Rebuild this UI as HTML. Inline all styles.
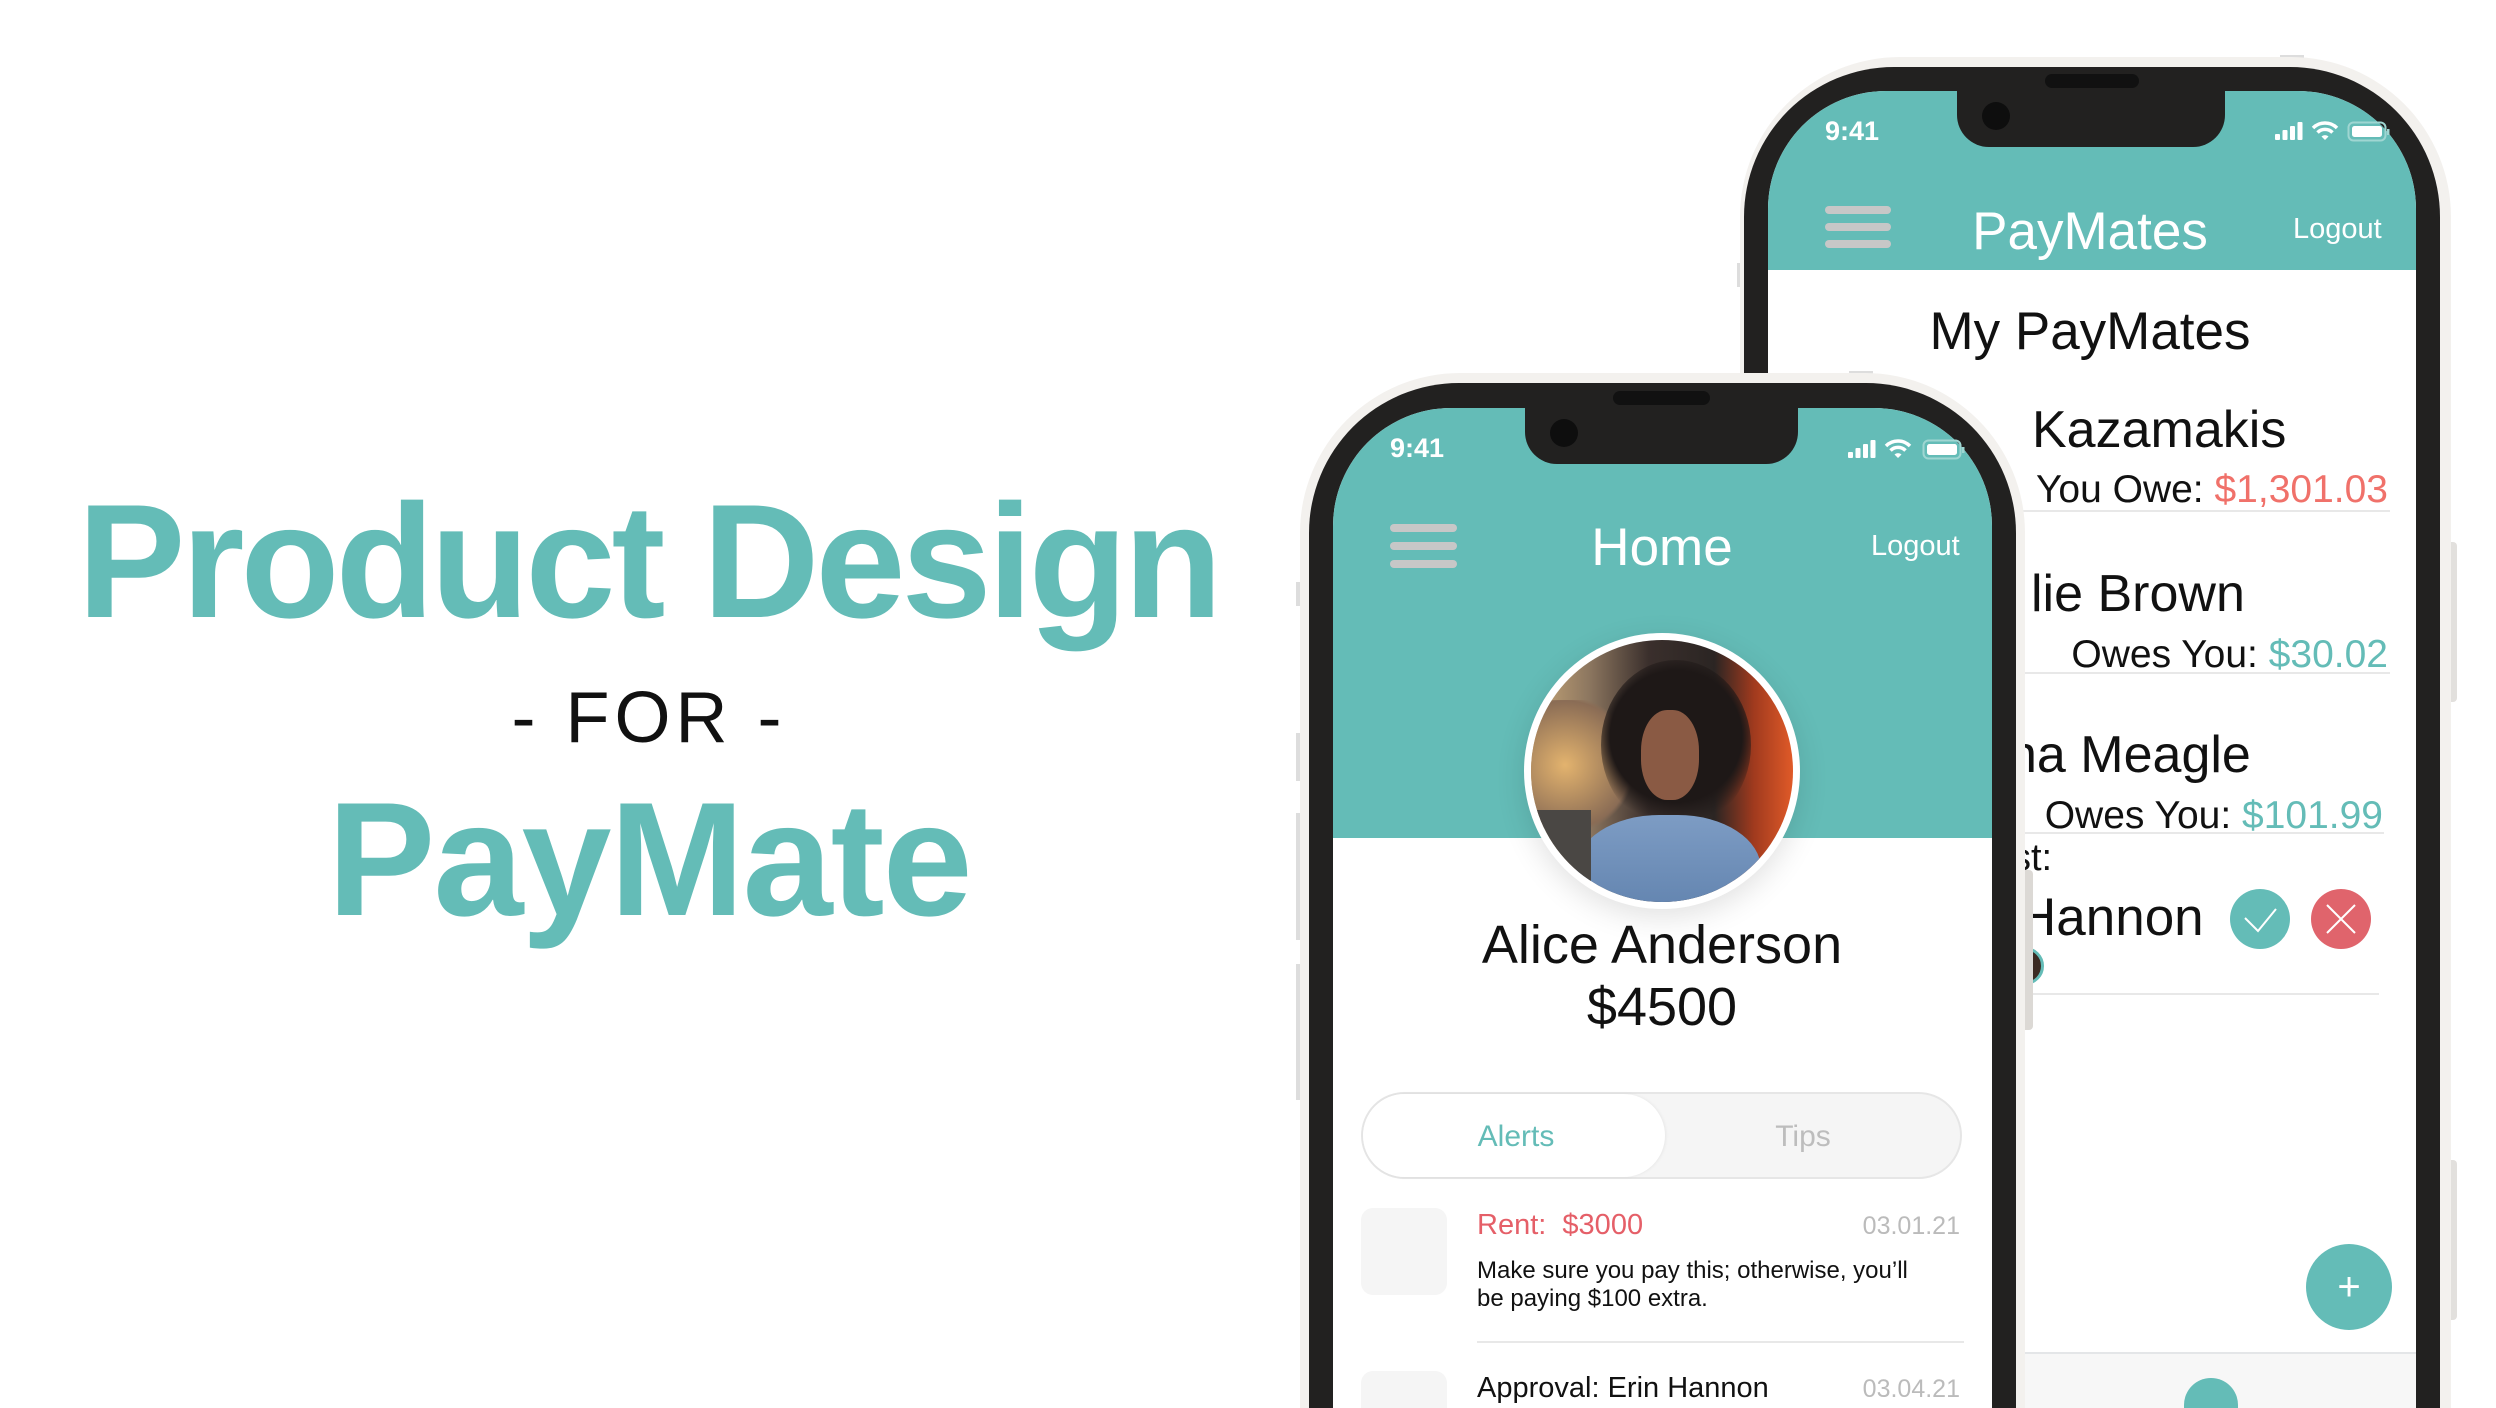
<!DOCTYPE html>
<html><head><meta charset="utf-8"><style>
*{margin:0;padding:0;box-sizing:border-box}
html,body{width:2496px;height:1408px;overflow:hidden;background:#fff}
#w{position:relative;width:2496px;height:1408px;overflow:hidden;font-family:"Liberation Sans",sans-serif}
.a{position:absolute}
.t{position:absolute;line-height:1;white-space:nowrap}
.teal{color:#64bcb7}
.bar{position:absolute;height:8px;border-radius:4px;background:#c7c7c7}
</style></head><body><div id="w">

<!-- Left title -->
<div class="t" style="left:0;width:1296px;text-align:center;top:481px;font-size:162px;font-weight:bold;letter-spacing:-4px;color:#64bcb7">Product Design</div>
<div class="t" style="left:0;width:1298px;text-align:center;top:682px;font-size:72px;letter-spacing:5px;color:#111">- FOR -</div>
<div class="t" style="left:0;width:1298px;text-align:center;top:779px;font-size:162px;font-weight:bold;letter-spacing:-2px;color:#64bcb7">PayMate</div>

<!-- BACK PHONE -->
<div class="a" style="left:1737px;top:263px;width:6px;height:24px;background:#ddd"></div>
<div class="a" style="left:2280px;top:55px;width:24px;height:10px;background:#ddd"></div>
<div class="a" style="left:2450px;top:542px;width:7px;height:160px;background:#e2e0dd;border-radius:0 4px 4px 0"></div>
<div class="a" style="left:2450px;top:1160px;width:7px;height:160px;background:#e2e0dd;border-radius:0 4px 4px 0"></div>
<div class="a" style="left:1740px;top:57px;width:711px;height:1351px;border-radius:160px 160px 0 0;background:#f3f1ee"></div>
<div class="a" style="left:1744px;top:67px;width:696px;height:1341px;border-radius:150px 150px 0 0;background:#222120"></div>
<div class="a" style="left:1768px;top:91px;width:648px;height:1317px;border-radius:118px 118px 0 0;background:#fff;overflow:hidden">
  <div class="a" style="left:0;top:0;width:648px;height:179px;background:#64bcb7"></div>
  <div class="a" style="left:0;top:1261px;width:648px;height:56px;background:#f7f7f7;border-top:2px solid #e4e6e8"></div>
  <div class="a" style="left:416px;top:1287px;width:54px;height:30px;border-radius:27px 27px 0 0;background:#64bcb7"></div>
</div>
<div class="a" style="left:1957px;top:67px;width:268px;height:80px;background:#222120;border-radius:0 0 32px 32px"></div>
<div class="a" style="left:2045px;top:74px;width:94px;height:14px;background:#111;border-radius:8px"></div>
<div class="a" style="left:1982px;top:102px;width:28px;height:28px;background:#0e0e0e;border-radius:50%"></div>
<div class="t" style="left:1825px;top:118px;font-size:27px;font-weight:bold;color:#fff">9:41</div>
<svg class="a" style="left:2275px;top:121px" width="120" height="22" viewBox="0 0 120 22">
 <rect x="0" y="13" width="5" height="6" rx="1" fill="#fff"/><rect x="7.5" y="9" width="5" height="10" rx="1" fill="#fff"/><rect x="15" y="5" width="5" height="14" rx="1" fill="#fff"/><rect x="22.5" y="1" width="5" height="18" rx="1" fill="#fff"/>
 <path d="M38 7 A17 17 0 0 1 62 7" stroke="#fff" stroke-width="3.5" fill="none"/><path d="M42.5 11.5 A10.5 10.5 0 0 1 57.5 11.5" stroke="#fff" stroke-width="3.5" fill="none"/><path d="M46.5 15.5 L50 19 L53.5 15.5 A5 5 0 0 0 46.5 15.5Z" fill="#fff"/>
 <rect x="73.5" y="1.5" width="37" height="18" rx="5" fill="none" stroke="#9fd6d2" stroke-width="2"/><rect x="77" y="5" width="30" height="11" rx="2.5" fill="#fff"/><rect x="112" y="8" width="2.5" height="6" fill="#9fd6d2"/>
</svg>
<div class="bar" style="left:1825px;top:206px;width:66px"></div>
<div class="bar" style="left:1825px;top:223px;width:66px"></div>
<div class="bar" style="left:1825px;top:240px;width:66px"></div>
<div class="t" style="left:1890px;width:400px;text-align:center;top:205px;font-size:53px;color:#fff">PayMates</div>
<div class="t" style="left:2293px;top:215px;font-size:29px;color:#fff">Logout</div>
<div class="t" style="left:1890px;width:400px;text-align:center;top:305px;font-size:53px;color:#111">My PayMates</div>

<div class="t" style="left:2032px;top:404px;font-size:52px;color:#111">Kazamakis</div>
<div class="t" style="right:108px;top:470px;font-size:39px;color:#111">You Owe: <span style="color:#f0716a">$1,301.03</span></div>
<div class="a" style="left:1800px;top:510px;width:590px;height:2px;background:#e8e8e8"></div>
<div class="t" style="left:2031px;top:568px;font-size:52px;color:#111">lie Brown</div>
<div class="t" style="right:108px;top:635px;font-size:39px;color:#111">Owes You: <span class="teal">$30.02</span></div>
<div class="a" style="left:1800px;top:672px;width:590px;height:2px;background:#e8e8e8"></div>
<div class="t" style="left:2008px;top:729px;font-size:52px;color:#111">na Meagle</div>
<div class="t" style="right:113px;top:796px;font-size:39px;color:#111">Owes You: <span class="teal">$101.99</span></div>
<div class="a" style="left:1800px;top:832px;width:584px;height:2px;background:#e8e8e8"></div>
<div class="t" style="left:2012px;top:839px;font-size:38px;color:#111">st:</div>
<div class="t" style="left:2018px;top:891px;font-size:53px;color:#111">Hannon</div>
<div class="a" style="left:2230px;top:889px;width:60px;height:60px;border-radius:50%;background:#64bcb7"></div>
<svg class="a" style="left:2230px;top:889px" width="60" height="60"><path d="M15 29 L28 42 L46 20" stroke="#fff" stroke-width="2" fill="none"/></svg>
<div class="a" style="left:2311px;top:889px;width:60px;height:60px;border-radius:50%;background:#e0646c"></div>
<svg class="a" style="left:2311px;top:889px" width="60" height="60"><path d="M16 16 L44 44 M44 16 L16 44" stroke="#fff" stroke-width="2" fill="none"/></svg>
<div class="a" style="left:1800px;top:993px;width:579px;height:2px;background:#e8e8e8"></div>
<div class="a" style="left:2006px;top:947px;width:38px;height:38px;border-radius:50%;background:#3b2a22;border:3px solid #64bcb7"></div>
<div class="a" style="left:2306px;top:1244px;width:86px;height:86px;border-radius:50%;background:#64bcb7;color:#fff;font-size:40px;line-height:86px;text-align:center">+</div>

<!-- FRONT PHONE -->
<div class="a" style="left:1296px;top:582px;width:6px;height:24px;background:#ddd"></div>
<div class="a" style="left:1296px;top:733px;width:6px;height:48px;background:#ddd"></div>
<div class="a" style="left:1296px;top:813px;width:6px;height:127px;background:#ddd"></div>
<div class="a" style="left:1296px;top:964px;width:6px;height:136px;background:#ddd"></div>
<div class="a" style="left:1849px;top:371px;width:24px;height:10px;background:#ddd"></div>
<div class="a" style="left:2025px;top:870px;width:8px;height:160px;background:#dcd9d5;border-radius:0 4px 4px 0"></div>
<div class="a" style="left:1300px;top:373px;width:725px;height:1035px;border-radius:160px 160px 0 0;background:#f3f1ee"></div>
<div class="a" style="left:1309px;top:383px;width:707px;height:1025px;border-radius:150px 150px 0 0;background:#222120"></div>
<div class="a" style="left:1333px;top:408px;width:659px;height:1000px;border-radius:118px 118px 0 0;background:#fff;overflow:hidden">
  <div class="a" style="left:0;top:0;width:659px;height:430px;background:#64bcb7"></div>
</div>
<div class="a" style="left:1525px;top:383px;width:273px;height:81px;background:#222120;border-radius:0 0 32px 32px"></div>
<div class="a" style="left:1613px;top:391px;width:97px;height:14px;background:#111;border-radius:8px"></div>
<div class="a" style="left:1550px;top:419px;width:28px;height:28px;background:#0e0e0e;border-radius:50%"></div>
<div class="t" style="left:1390px;top:435px;font-size:27px;font-weight:bold;color:#fff">9:41</div>
<svg class="a" style="left:1848px;top:439px" width="120" height="22" viewBox="0 0 120 22">
 <rect x="0" y="13" width="5" height="6" rx="1" fill="#fff"/><rect x="7.5" y="9" width="5" height="10" rx="1" fill="#fff"/><rect x="15" y="5" width="5" height="14" rx="1" fill="#fff"/><rect x="22.5" y="1" width="5" height="18" rx="1" fill="#fff"/>
 <path d="M38 7 A17 17 0 0 1 62 7" stroke="#fff" stroke-width="3.5" fill="none"/><path d="M42.5 11.5 A10.5 10.5 0 0 1 57.5 11.5" stroke="#fff" stroke-width="3.5" fill="none"/><path d="M46.5 15.5 L50 19 L53.5 15.5 A5 5 0 0 0 46.5 15.5Z" fill="#fff"/>
 <rect x="75.5" y="1.5" width="37" height="18" rx="5" fill="none" stroke="#9fd6d2" stroke-width="2"/><rect x="79" y="5" width="30" height="11" rx="2.5" fill="#fff"/><rect x="114" y="8" width="2.5" height="6" fill="#9fd6d2"/>
</svg>
<div class="bar" style="left:1390px;top:524px;width:67px"></div>
<div class="bar" style="left:1390px;top:542px;width:67px"></div>
<div class="bar" style="left:1390px;top:560px;width:67px"></div>
<div class="t" style="left:1462px;width:400px;text-align:center;top:521px;font-size:53px;color:#fff">Home</div>
<div class="t" style="left:1871px;top:532px;font-size:29px;color:#fff">Logout</div>

<!-- avatar -->
<div class="a" style="left:1524px;top:633px;width:276px;height:276px;border-radius:50%;background:#fff;box-shadow:0 8px 30px rgba(0,0,0,.12)"></div>
<div class="a" style="left:1531px;top:640px;width:262px;height:262px;border-radius:50%;overflow:hidden;background:linear-gradient(90deg,#c9a878 0%,#8d7760 22%,#3a2f2c 45%,#2b2523 70%,#a03a1e 85%,#e05a28 100%)">
  <div class="a" style="left:-10px;top:60px;width:110px;height:130px;background:radial-gradient(ellipse at 40% 50%,#e3b36e,#8a6c55 70%,transparent 75%)"></div>
  <div class="a" style="left:70px;top:20px;width:150px;height:170px;border-radius:50%;background:radial-gradient(circle at 50% 45%,#1e1817 55%,rgba(30,24,23,0) 72%)"></div>
  <div class="a" style="left:110px;top:70px;width:58px;height:90px;border-radius:45%;background:#8a5a44"></div>
  <div class="a" style="left:45px;top:175px;width:185px;height:120px;border-radius:45% 45% 0 0;background:linear-gradient(180deg,#7d9cc4,#5c7eaa)"></div>
  <div class="a" style="left:0;top:170px;width:60px;height:100px;background:#4a4744"></div>
</div>

<div class="t" style="left:1462px;width:400px;text-align:center;top:918px;font-size:54px;color:#111">Alice Anderson</div>
<div class="t" style="left:1462px;width:400px;text-align:center;top:980px;font-size:54px;color:#111">$4500</div>

<div class="a" style="left:1361px;top:1092px;width:601px;height:87px;border-radius:44px;background:#f5f5f5;border:2px solid #e6e6e6"></div>
<div class="a" style="left:1363px;top:1094px;width:302px;height:83px;border-radius:42px;background:#fff;box-shadow:1px 0 3px rgba(0,0,0,.06)"></div>
<div class="t" style="left:1416px;width:200px;text-align:center;top:1122px;font-size:30px;color:#64bcb7">Alerts</div>
<div class="t" style="left:1703px;width:200px;text-align:center;top:1122px;font-size:30px;color:#bdbdbd">Tips</div>

<div class="a" style="left:1361px;top:1208px;width:86px;height:87px;border-radius:12px;background:#f5f5f5"></div>
<div class="t" style="left:1477px;top:1211px;font-size:29px;color:#e55f68">Rent:&nbsp; $3000</div>
<div class="t" style="right:536px;top:1214px;font-size:25px;color:#bbb">03.01.21</div>
<div class="a" style="left:1477px;top:1257px;font-size:24px;line-height:28px;color:#111;width:480px">Make sure you pay this; otherwise, you’ll<br>be paying $100 extra.</div>
<div class="a" style="left:1477px;top:1341px;width:487px;height:2px;background:#e8e8e8"></div>
<div class="a" style="left:1361px;top:1371px;width:86px;height:37px;border-radius:12px 12px 0 0;background:#f5f5f5"></div>
<div class="t" style="left:1477px;top:1374px;font-size:29px;color:#111">Approval: Erin Hannon</div>
<div class="t" style="right:536px;top:1377px;font-size:25px;color:#bbb">03.04.21</div>

</div></body></html>
